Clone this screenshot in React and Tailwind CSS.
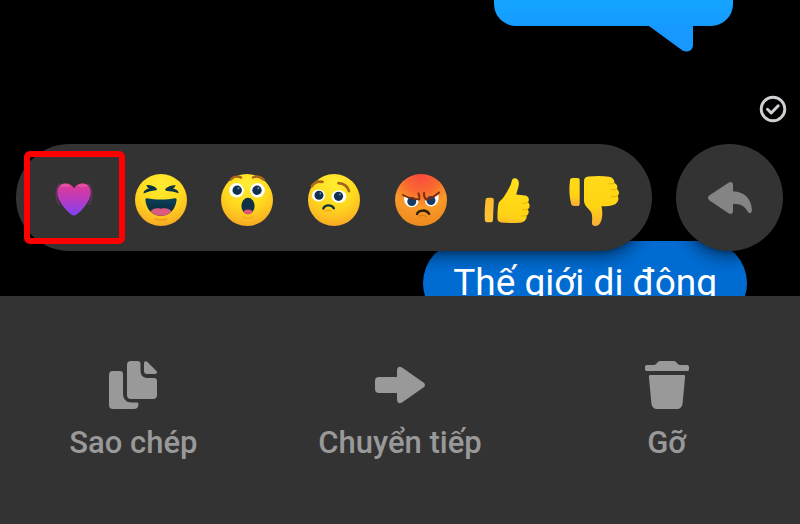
import { useState } from "react";

function Heart() {
  return (
    <>
      <path
        d="M12 9.500C7 14 7 24 11 31M40 9.500c5 4.500 5 14.500 1 21.500"
        fill="none"
        stroke="#a0388f"
        strokeOpacity="0.4"
        strokeWidth="1.500"
      />
      <path
        d="M26 41.500c-2 0-5-2.600-8.500-6.500C12 28.500 9.300 23.500 9.300 18.200 9.300 13 12.800 9.300 17.400 9.300c4 0 7 2.200 8.600 5.200 1.600-3 4.600-5.200 8.600-5.200 4.600 0 8.100 3.700 8.100 8.900 0 5.300-2.700 10.300-8.200 16.800-3.500 3.900-6.500 6.500-8.500 6.500Z"
        fill="url(#heart)"
      />
      <ellipse cx="17" cy="11.500" rx="5" ry="1.500" fill="#f58cb9" opacity="0.3" />
      <ellipse cx="35" cy="11.500" rx="5" ry="1.500" fill="#f58cb9" opacity="0.3" />
    </>
  );
}

function Laugh() {
  return (
    <>
      <circle cx="26" cy="26" r="26" fill="url(#face)" />
      <g fill="#0c3446">
        <path d="M11.500 11c4.500 0 8.500 1.400 10.100 3.400.6.900.2 1.700-.8 1.900-4 .6-7.600 1.200-12.100 3.200-.7-2.200 1.800-4.300 5.300-5.100-1.400-.9-2.400-1.800-2.500-3.400Z" />
        <path d="M40.500 11c-4.500.2-8.300 1.800-10 3.800-.6.900-.2 1.700.8 1.900 4 .6 7.800.8 12.200 2.500.5-2.100-2-4.200-5.600-4.700 1.600-.9 2.500-1.900 2.600-3.500Z" />
      </g>
      <path
        d="M12 24.200c8 1.700 20 1.700 28 0 1.200-.200 1.800.600 1.600 2-1.200 9.300-7 15.600-15.600 15.600S11.400 35.500 10.400 26.200c-.2-1.400.4-2.200 1.600-2Z"
        fill="url(#mouth)"
      />
      <path
        d="M15.500 37.500c2.200-3 6-4 10.500-2.800 4.500-1.200 8.300-.2 10.500 2.800-2.600 2.800-6.100 4.300-10.500 4.300s-7.900-1.500-10.500-4.300Z"
        fill="#dc5a7f"
      />
      <path d="M20 45c4 1.200 8 1.200 12 0" stroke="#ed9a1c" strokeWidth="1.500" fill="none" />
    </>
  );
}

function Wow() {
  return (
    <>
      <circle cx="26" cy="26" r="26" fill="url(#face)" />
      <path
        d="M10 5.500c2-2.700 6-3.700 10-2M32 3.500c3.500-1.700 7.500-.8 10.500 2"
        fill="none"
        stroke="#a9651a"
        strokeWidth="2.500"
        strokeLinecap="round"
      />
      <circle cx="15.500" cy="16.300" r="7.300" fill="#fff" />
      <circle cx="36.500" cy="16.300" r="7.300" fill="#fff" />
      <circle cx="16.200" cy="16.300" r="4.700" fill="#12304f" />
      <circle cx="36" cy="16.300" r="4.700" fill="#12304f" />
      <circle cx="17.500" cy="14.300" r="1" fill="#6d8fb0" />
      <circle cx="37.300" cy="14.300" r="1" fill="#6d8fb0" />
      <ellipse cx="27" cy="32" rx="6.600" ry="8.300" fill="#0f3046" />
      <path d="M22.500 37.800c1-3 8-3 9.200 0-1.200 3.300-7.700 3.300-9.200 0Z" fill="#e05578" />
      <path d="M21 42.500c4 2.500 8 2.500 12 0" stroke="#f5b01c" strokeWidth="1.500" fill="none" />
    </>
  );
}

function Sad() {
  return (
    <>
      <circle cx="26" cy="26" r="26" fill="url(#face)" />
      <path
        d="M4 12c2-3.500 6-5 10.500-4.200M30.500 9.200c5.500.3 9 3 10.500 8"
        fill="none"
        stroke="#a9651a"
        strokeWidth="2.700"
        strokeLinecap="round"
      />
      <ellipse cx="10.500" cy="21.500" rx="6.600" ry="6" fill="#fff" />
      <ellipse cx="31" cy="22.500" rx="7.400" ry="6.300" fill="#fff" />
      <circle cx="11" cy="21.300" r="4.500" fill="#12304f" />
      <circle cx="30.500" cy="22.300" r="4.600" fill="#12304f" />
      <circle cx="12.300" cy="19.500" r="0.900" fill="#6d8fb0" />
      <circle cx="31.800" cy="20.500" r="0.900" fill="#6d8fb0" />
      <path
        d="M15.300 34.500c2-4 8-4 10.600-.2"
        fill="none"
        stroke="#12343c"
        strokeWidth="2.300"
        strokeLinecap="round"
      />
      <path d="M16.500 37.500c2-1.500 5-1.500 7 0" stroke="#f2a81c" strokeWidth="1.500" fill="none" />
    </>
  );
}

function Angry() {
  return (
    <>
      <circle cx="26" cy="26" r="26" fill="url(#angry)" />
      <path d="M9 22.500 23.500 26c.6 4-3 7.200-7 7.200-4.500 0-8-4.200-7.500-10.700Z" fill="#fff" />
      <path d="M43.500 20.500 30 26c-.3 4 3 6.700 7 6.400 4.300-.4 7.500-5.400 6.500-11.900Z" fill="#fff" />
      <circle cx="16.800" cy="27.500" r="4.500" fill="#163a66" />
      <circle cx="36" cy="26.500" r="4.500" fill="#163a66" />
      <path
        d="M8 21c5 2.800 10 4 16 4.500M44 18.500c-4 3.800-8 5.800-13 7M23.500 19.500c1 2 1.300 4 .7 6M29 19c-.3 2.500.3 4.500 2 6.500"
        fill="none"
        stroke="#7c2c0b"
        strokeWidth="2"
        strokeLinecap="round"
      />
      <path
        d="M22 40c2-4.600 9.500-4.600 12.200-.2"
        fill="none"
        stroke="#2a1c10"
        strokeWidth="2.300"
        strokeLinecap="round"
      />
      <path d="M23.500 42.500c2-1.500 6-1.500 8 0" stroke="#d97a14" strokeWidth="1.200" fill="none" />
    </>
  );
}

function ThumbUp() {
  return (
    <>
      <path
        d="M7 23.700h3.200c1.800 0 2.700.8 2.600 2.500l-.8 19.500c-.1 1.800-1 2.600-2.800 2.600H6.500c-1.700 0-2.600-.9-2.700-2.600-.3-6.500 0-13 .7-19.500.2-1.700 1-2.500 2.500-2.500Z"
        fill="url(#cuff)"
      />
      <path
        d="M16.500 44.500c-.2-5 .2-10 .8-14 .5-3.500 3.500-4.500 5.500-7.500 2.600-4 5-8 7-12.500 1-2.500 1-6.200 3.700-6.200 3.500 0 4.700 2.700 4.300 6.200-.4 3.700-1.800 6.500-2.600 10 2.500.6 5.800.5 9 1 3.500.5 4.600 4 2.800 6.700 2.200 2 2.200 5.300-.2 7 1.600 2.500.9 5-1.200 6.400.4 4-2.300 7-6.600 7.100-6.500.3-13.500.5-18.800-.2-2.300-.3-3.600-1.500-3.700-4Z"
        fill="url(#hand-up)"
      />
      <path
        d="M41.500 29.300c2 .3 4.200-.1 5.600-1.300M41.500 35.800c2 .2 4-.1 5.400-1M40.500 42c1.800.2 3.500-.1 5-.8"
        fill="none"
        stroke="#e8b000"
        strokeWidth="1"
        strokeLinecap="round"
      />
    </>
  );
}

function ThumbDown() {
  return (
    <>
      <path
        d="M4.500 4h5c1.400 0 2.200.8 2.200 2.200v23.500c0 1.500-.8 2.300-2.300 2.300H6c-1.800 0-2.700-.7-3-2.400C1.300 21.500.9 14 2 6.400 2.200 4.800 3 4 4.500 4Z"
        fill="url(#hand-down)"
      />
      <path
        d="M16 7c0-2.700 1.700-4 4.300-4.400C28 1.700 35 1.700 41 2.800c3.700.7 5.600 3 5.300 6.200 2.700 1.200 3.700 3.500 2.700 6 2.500 2 2.600 5 .8 7 1.200 2.500.8 5.300-1.600 7.300-2.200 2.600-8 3-14.700 3 .7 3.700 1.200 7 .5 11-.7 5-2.600 8.400-6.500 8.800-2.500.2-3.800-1.300-3.500-3.800.5-5 .3-8.800-1.700-11.300-2.300-3-6.300-5.500-6.300-10.500V7Z"
        fill="url(#hand-down)"
      />
      <path
        d="M41 9.700c1.800.4 3.900.1 5.300-.7M43 15.700c2 .3 4 .1 5.800-.7M43.500 22.500c2 .3 4.200.2 6-.5"
        fill="none"
        stroke="#e8b000"
        strokeWidth="1"
        strokeLinecap="round"
      />
    </>
  );
}

const reactions = [
  { id: "heart", label: "Yêu thích", art: Heart },
  { id: "laugh", label: "Haha", art: Laugh },
  { id: "wow", label: "Wow", art: Wow },
  { id: "sad", label: "Buồn", art: Sad },
  { id: "angry", label: "Phẫn nộ", art: Angry },
  { id: "up", label: "Thích", art: ThumbUp },
  { id: "down", label: "Không thích", art: ThumbDown },
];

function Gradients() {
  return (
    <svg className="absolute h-0 w-0" aria-hidden="true">
      <defs>
        <linearGradient id="heart" x1="0" y1="0" x2="0" y2="1">
          <stop offset="0" stopColor="#e23a92" />
          <stop offset="0.5" stopColor="#b93bc0" />
          <stop offset="1" stopColor="#7f42f5" />
        </linearGradient>
        <radialGradient id="face" cx="0.5" cy="0.2" r="0.85">
          <stop offset="0" stopColor="#ffec32" />
          <stop offset="0.5" stopColor="#ffda1e" />
          <stop offset="0.8" stopColor="#fcbb22" />
          <stop offset="1" stopColor="#f5a024" />
        </radialGradient>
        <linearGradient id="mouth" x1="0" y1="0" x2="0" y2="1">
          <stop offset="0" stopColor="#0a4258" />
          <stop offset="1" stopColor="#0c2338" />
        </linearGradient>
        <radialGradient id="angry" cx="0.5" cy="0.02" r="0.95">
          <stop offset="0" stopColor="#fb4a3f" />
          <stop offset="0.35" stopColor="#f9692f" />
          <stop offset="0.65" stopColor="#f99a2a" />
          <stop offset="1" stopColor="#ee8c1e" />
        </radialGradient>
        <linearGradient id="hand-up" x1="0.5" y1="0" x2="0.4" y2="1">
          <stop offset="0" stopColor="#ffe01c" />
          <stop offset="0.85" stopColor="#ffd314" />
          <stop offset="1" stopColor="#fcbc26" />
        </linearGradient>
        <linearGradient id="hand-down" x1="0.5" y1="0" x2="0.5" y2="1">
          <stop offset="0" stopColor="#ffd91a" />
          <stop offset="0.6" stopColor="#ffd512" />
          <stop offset="1" stopColor="#f9ac38" />
        </linearGradient>
        <linearGradient id="cuff" x1="0" y1="0" x2="0" y2="1">
          <stop offset="0" stopColor="#fdb92c" />
          <stop offset="1" stopColor="#fcc43a" />
        </linearGradient>
      </defs>
    </svg>
  );
}

function CopyIcon() {
  return (
    <svg viewBox="0 0 48 48" className="h-12 w-12" fill="currentColor" aria-hidden="true">
      <path d="M4 10h7c2 0 3 1 3 3v19c0 6.300 3 9.500 9 9.500h4.500c1.600 0 2.200.6 2 2-.4 3-1.700 4.500-4.500 4.500H4c-2.700 0-4-1.300-4-4V14c0-2.700 1.300-4 4-4Z" />
      <path d="M22 0h6.500c2 0 3 1 3 3v6c0 5.500 2.500 8 8 8H45c2 0 3 1 3 3v14c0 2.700-1.300 4-4 4H22c-2.700 0-4-1.300-4-4V4c0-2.700 1.300-4 4-4Z" />
      <path d="M35 2c0-1.700 1.800-2.500 3.200-1.300l9 9c1.600 1.700.8 3.300-1.200 3.300h-8c-2 0-3-1-3-3V2Z" />
    </svg>
  );
}

function ForwardIcon() {
  return (
    <svg viewBox="0 0 50 48" className="h-12 w-[50px]" fill="currentColor" aria-hidden="true">
      <path d="M4 16h18V9.500c0-3.500 2.700-4.500 5-2.900l21.400 14.800c2.100 1.500 2.100 3.700 0 5.200L27 41.400c-2.300 1.600-5 .6-5-2.900V32H4c-2.600 0-4-1.400-4-4v-8c0-2.600 1.400-4 4-4Z" />
    </svg>
  );
}

function TrashIcon() {
  return (
    <svg viewBox="0 0 44 48" className="h-12 w-11" fill="currentColor" aria-hidden="true">
      <path d="M15 0h14c2.500 0 3 3.500 6 4h7c1.400 0 2 .7 2 2v2c0 1.400-.6 2-2 2H2c-1.400 0-2-.6-2-2V6c0-1.300.6-2 2-2h7c3-.5 3.500-4 6-4Z" />
      <path d="M5.500 14h33c1.300 0 1.700.6 1.600 1.700l-2.500 26.500c-.4 3.900-2.400 5.800-6.200 5.800H12.600c-3.800 0-5.800-1.900-6.200-5.800L3.900 15.700C3.800 14.600 4.200 14 5.500 14Z" />
    </svg>
  );
}

const actions = [
  { label: "Sao chép", icon: CopyIcon },
  { label: "Chuyển tiếp", icon: ForwardIcon },
  { label: "Gỡ", icon: TrashIcon },
];

export default function App() {
  const [selected, setSelected] = useState("heart");

  return (
    <main className="flex min-h-screen flex-col bg-black font-[Roboto,sans-serif]">
      <Gradients />

      <section className="flex flex-col">
        <div className="relative mr-[67px] h-[26px] w-[239px] self-end rounded-b-[22px] bg-linear-to-b from-[#14a5ff] to-[#159bff]">
          <svg
            viewBox="0 0 44 26"
            className="absolute top-full right-10 h-[26px] w-11"
            aria-hidden="true"
          >
            <path d="M0 0h44v18.500c0 6-5.500 8.800-10.500 6L0 0Z" fill="#1798ff" />
          </svg>
        </div>

        <svg
          viewBox="0 0 28 28"
          className="mt-[69px] mr-[13px] h-7 w-7 self-end"
          fill="none"
          stroke="#d0d0d4"
          role="img"
          aria-label="Đã gửi"
        >
          <circle cx="14" cy="14" r="11.800" strokeWidth="2.900" />
          <path
            d="m8.500 14.300 3.700 3.700 7-7.200"
            strokeWidth="3"
            strokeLinecap="round"
            strokeLinejoin="round"
          />
        </svg>

        <div className="relative z-10 mt-[21px] flex gap-6 pr-[17px] pl-4">
          <div className="grid h-[107px] flex-1 grid-cols-7 rounded-full bg-[#333333] px-[15px] pt-[5px] shadow-lg shadow-black/40">
            {reactions.map(({ id, label, art: Art }) => (
              <button
                key={id}
                type="button"
                aria-label={label}
                aria-pressed={selected === id}
                onClick={() => setSelected(id)}
                className="relative flex items-center justify-center"
              >
                <svg viewBox="0 0 52 52" className="h-[52px] w-[52px] overflow-visible">
                  <Art />
                </svg>
                {selected === id && (
                  <span className="absolute -inset-x-[7px] top-[2px] bottom-[7px] rounded-md border-6 border-[#fe0000]" />
                )}
              </button>
            ))}
          </div>

          <button
            type="button"
            aria-label="Trả lời"
            className="flex h-[107px] w-[107px] items-center justify-center rounded-full bg-[#333333] text-[#848484] shadow-lg shadow-black/40"
          >
            <svg viewBox="0 0 44 32" className="h-8 w-11" fill="currentColor" aria-hidden="true">
              <path d="M1.200 13.500 20.500.700C22.800-.800 25 .300 25 3v6.200c11 .3 18.700 7.500 18.900 18.800 0 3.500-2.700 4.200-4.400 1.200-2.700-5-7-7.300-14.500-7.400V29c0 2.700-2.200 3.700-4.500 2.200L1.200 18.200c-1.600-1.200-1.600-3.500 0-4.700Z" />
            </svg>
          </button>
        </div>

        <div className="-mt-[10px] mr-[53px] h-[55px] self-end overflow-hidden">
          <p className="rounded-[42px] bg-[#006bd1] px-[30px] py-[18px] text-[37px] leading-12 text-white">
            Thế giới di động
          </p>
        </div>
      </section>

      <section className="grid flex-1 grid-cols-3 items-start bg-[#333333] pt-[65px] pb-[63px] text-[#999999]">
        {actions.map(({ label, icon: Icon }) => (
          <button key={label} type="button" className="flex flex-col items-center gap-4">
            <Icon />
            <span className="text-[31px] leading-9 font-medium">{label}</span>
          </button>
        ))}
      </section>
    </main>
  );
}
